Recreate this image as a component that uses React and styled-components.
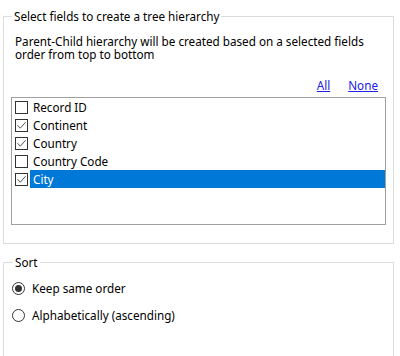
import React from 'react'
import styled, { createGlobalStyle } from 'styled-components'

const Global = createGlobalStyle`
  html, body {
    margin: 0;
    padding: 0;
    background: #ffffff;
  }
  body {
    font-family: "Noto Sans", "Open Sans", sans-serif;
    font-size: 11.7px;
    color: #000;
  }
`

const Page = styled.div`
  padding: 8px 0 0 3px;
  width: 400px;
  height: 356px;
  box-sizing: border-box;
  overflow: hidden;
  display: flex;
  flex-direction: column;
  gap: 10px;
`

const Group = styled.fieldset`
  margin: 0;
  box-sizing: border-box;
  flex-shrink: 0;
  width: 391px;
  min-height: ${p => p.$minHeight || 0}px;
  border: 1px solid #dcdcdc;
  padding: ${p => p.$padding};
  min-inline-size: 0;
`

const Legend = styled.legend`
  margin-left: 1px;
  padding: 0 2px;
  line-height: 16px;
  height: 16px;
`

const Description = styled.p`
  margin: 0 0 16px 4px;
  line-height: 13px;
`

const LinkRow = styled.div`
  display: flex;
  justify-content: flex-end;
  gap: 18px;
  padding-right: 8px;
  height: 16px;
  line-height: 16px;
  margin-bottom: 4px;
`

const Link = styled.a`
  color: #2020e8;
  text-decoration: underline;
  cursor: pointer;
`

const ListBox = styled.div`
  box-sizing: border-box;
  width: 375px;
  height: 128px;
  border: 1px solid #a0a0a0;
  background: #fff;
`

const Row = styled.div`
  display: flex;
  align-items: center;
  height: 18px;
  padding-left: 3px;
`

const Box = styled.span`
  box-sizing: border-box;
  width: 13px;
  height: 13px;
  border: 1px solid #333;
  background: #fff;
  display: flex;
  align-items: center;
  justify-content: center;
  flex: none;
`

const Label = styled.span`
  flex: 1;
  margin-left: 2px;
  padding-left: 3px;
  height: 18px;
  line-height: 18px;
  background: ${p => (p.$selected ? '#0078d7' : 'transparent')};
  color: ${p => (p.$selected ? '#fff' : '#000')};
`

const RadioRow = styled.div`
  display: flex;
  align-items: center;
  height: 16px;
  gap: 7px;
  margin-bottom: 11px;
`

const Circle = styled.span`
  box-sizing: border-box;
  width: 13px;
  height: 13px;
  border-radius: 50%;
  border: 1px solid #333;
  display: flex;
  align-items: center;
  justify-content: center;
  flex: none;

  &::after {
    content: '';
    width: 7px;
    height: 7px;
    border-radius: 50%;
    background: ${p => (p.$checked ? '#333' : 'transparent')};
  }
`

const fields = [
  { name: 'Record ID', checked: false },
  { name: 'Continent', checked: true },
  { name: 'Country', checked: true },
  { name: 'Country Code', checked: false },
  { name: 'City', checked: true, selected: true },
]

function Check() {
  return (
    <svg width="11" height="11" viewBox="0 0 11 11">
      <path d="M1.5 5.2 L4.3 8.2 L9.6 2.2" fill="none" stroke="#555" strokeWidth="1" />
    </svg>
  )
}

export default function App() {
  return (
    <>
      <Global />
      <Page>
        <Group $padding="11px 7px 18px 7px">
          <Legend>Select fields to create a tree hierarchy</Legend>
          <Description>
            Parent-Child hierarchy will be created based on a selected fields
            <br />
            order from top to bottom
          </Description>
          <LinkRow>
            <Link>All</Link>
            <Link>None</Link>
          </LinkRow>
          <ListBox>
            {fields.map(f => (
              <Row key={f.name}>
                <Box>{f.checked && <Check />}</Box>
                <Label $selected={f.selected}>{f.name}</Label>
              </Row>
            ))}
          </ListBox>
        </Group>
        <Group $padding="10px 7px 0 8px" $minHeight={120}>
          <Legend>Sort</Legend>
          <RadioRow>
            <Circle $checked />
            <span>Keep same order</span>
          </RadioRow>
          <RadioRow>
            <Circle />
            <span>Alphabetically (ascending)</span>
          </RadioRow>
        </Group>
      </Page>
    </>
  )
}
